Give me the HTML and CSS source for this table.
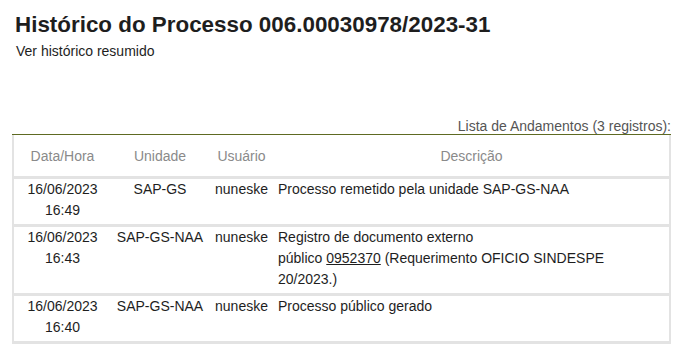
FILE: index.html
```html
<!DOCTYPE html>
<html lang="pt-BR">
<head>
    <meta charset="UTF-8">
    <title>Histórico do Processo</title>
    <link rel="stylesheet" href="styles.css">
</head>
<body>
    <div class="page">
        <h1 class="title">Histórico do Processo 006.00030978/2023-31</h1>
        <a class="summary-link" href="#">Ver histórico resumido</a>

        <div class="list-caption">Lista de Andamentos (3 registros):</div>
        <table class="history">
            <colgroup>
                <col class="col-date">
                <col class="col-unit">
                <col class="col-user">
                <col>
            </colgroup>
            <thead>
                <tr>
                    <th>Data/Hora</th>
                    <th>Unidade</th>
                    <th>Usuário</th>
                    <th>Descrição</th>
                </tr>
            </thead>
            <tbody>
                <tr>
                    <td class="center">16/06/2023<br>16:49</td>
                    <td class="center">SAP-GS</td>
                    <td class="center">nuneske</td>
                    <td>Processo remetido pela unidade SAP-GS-NAA</td>
                </tr>
                <tr>
                    <td class="center">16/06/2023<br>16:43</td>
                    <td class="center">SAP-GS-NAA</td>
                    <td class="center">nuneske</td>
                    <td>Registro de documento externo<br>público <a href="#">0952370</a> (Requerimento OFICIO SINDESPE<br>20/2023.)</td>
                </tr>
                <tr>
                    <td class="center">16/06/2023<br>16:40</td>
                    <td class="center">SAP-GS-NAA</td>
                    <td class="center">nuneske</td>
                    <td>Processo público gerado</td>
                </tr>
            </tbody>
        </table>
    </div>
</body>
</html>
```

FILE: styles.css
```css
body {
    font-family: "Liberation Sans", Arial, sans-serif;
    font-size: 14px;
    color: #1e1e1e;
    background-color: #ffffff;
    margin: 0;
    padding: 0;
}

.page {
    margin: 0 16px 0 12px;
}

.title {
    font-size: 22.4px;
    font-weight: bold;
    line-height: 26px;
    color: #1e1e1e;
    margin: 12px 0 0 0;
    padding-left: 3px;
}

.summary-link {
    display: block;
    line-height: 16px;
    margin-top: 5px;
    padding-left: 4px;
    color: #1e1e1e;
    text-decoration: none;
}

.list-caption {
    text-align: right;
    line-height: 16px;
    margin-top: 59px;
    color: #555555;
    border-bottom: 1px solid #5e6a22;
}

.history {
    width: 100%;
    border-collapse: collapse;
    border: 2px solid #e3e3e3;
    border-top: none;
}

.col-date {
    width: 98px;
}

.col-unit {
    width: 98px;
}

.col-user {
    width: 65px;
}

.history th {
    height: 41px;
    padding: 0;
    font-weight: normal;
    color: #8a8a8a;
    text-align: center;
    border-bottom: 3px solid #e3e3e3;
}

.history td {
    padding: 0 4px 3px 4px;
    line-height: 21px;
    vertical-align: top;
    border-bottom: 3px solid #e3e3e3;
}

.history td.center {
    text-align: center;
}

.history td a {
    color: #1e1e1e;
}
```
